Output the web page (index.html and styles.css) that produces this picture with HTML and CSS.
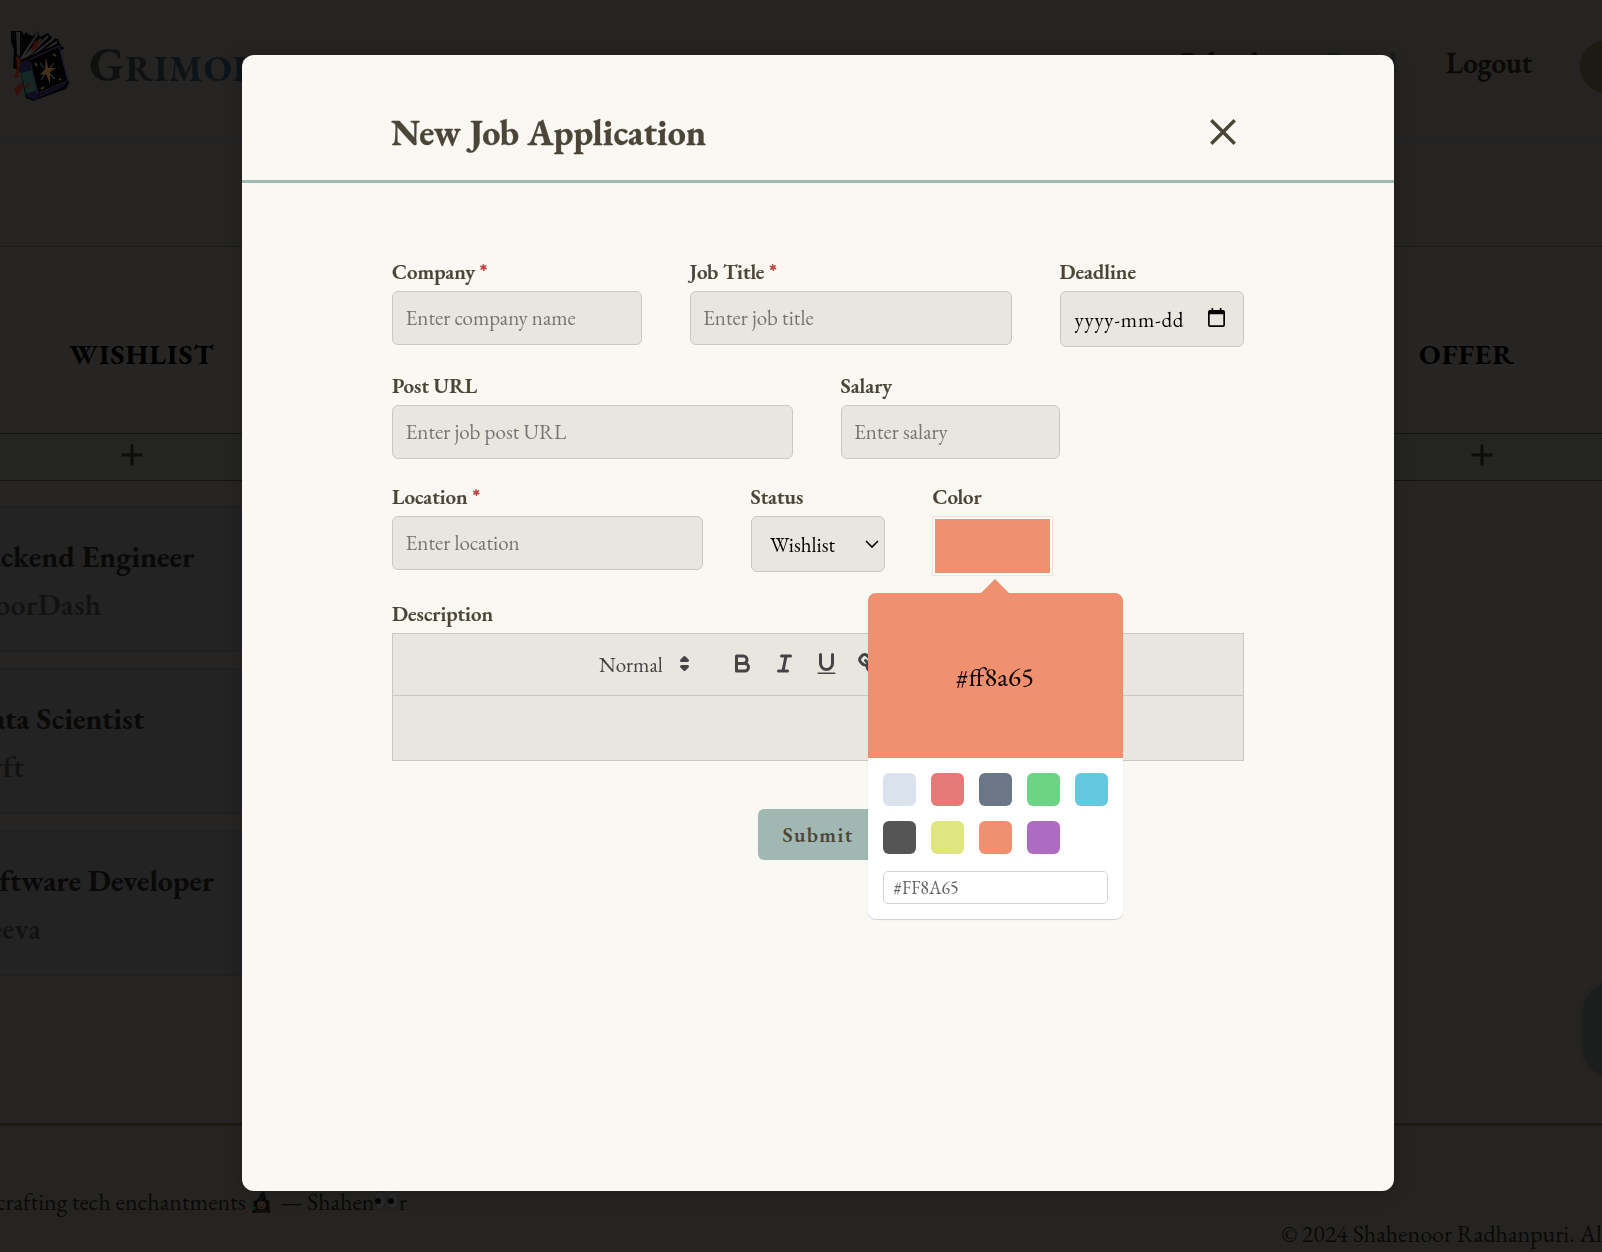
FILE: index.html
```html
<!DOCTYPE html>
<html lang="en">
<head>
<meta charset="utf-8">
<title>Grimoire</title>
<link rel="stylesheet" href="styles.css">
</head>
<body>
<div class="page">
  <header class="topbar">
    <div class="brand">
      <svg class="brand-logo" viewBox="0 0 60 72">
        <path d="M1 1h11l2 4 2-3 3 3 4 1 5-5 2 6 8-4 4 5 6 1 3 7 4 2-30 18-15 5-7-3 1-18-3-8z" fill="#020202"/>
        <path d="M6 2h4v25l-3-3z" fill="#242326"/>
        <path d="M28 3L11 29M31 9L12 30M38 6L14 30M44 8L17 30M47 12L22 29" stroke="#29282a" stroke-width="2.2"/>
        <path d="M24 12l6-3-3 9-6 4z" fill="#35100b"/>
        <path d="M8 31l41-18 2 9 8 31-3 6-33 12-7-3z" fill="#020203"/>
        <path d="M9 33l9-4 10 36 29-13-2 4-31 14-7-3z" fill="#110d20"/>
        <path d="M11 43l11-3 5 20-11 4z" fill="#152823"/>
        <path d="M19 30l30-14 9 35M20 32l8 32M29 63l28-12" fill="none" stroke="#1d1a2b" stroke-width="1.3"/>
        <path d="M24 32l25-12 7 29-26 12z" fill="#020203"/>
        <path d="M6 26l5 3-3 19-4-1 3-8zM11 52l3 5-7 9-3-6z" fill="#35100b"/>
        <path d="M36 27l2 11 8 0-6 4 0 12-4-10-6 1 5-6z" fill="#44301b"/>
        <path d="M30 33l4 5M44 33l-4 5M31 50l4-6M45 49l-5-5" stroke="#263936" stroke-width="1.200"/>
        <path d="M25 33l2 3M43 24l3 2M31 59l3-2M49 50l2-1" stroke="#403410" stroke-width="1.800"/>
        <path d="M18 52v7M15 56l6-1" stroke="#34110d" stroke-width="1.2"/>
      </svg>
      <span class="brand-name">G<span class="brand-caps">RIMOIRE</span></span>
    </div>
    <nav class="nav">
      <a class="nav-calendar">Calendar</a>
      <a class="nav-board">Board</a>
      <a class="nav-logout">Logout</a>
    </nav>
    <div class="avatar"></div>
  </header>

  <div class="toolbar"></div>

  <main class="board">
    <section class="column column-first">
      <h2 class="column-title wishlist">WISHLIST</h2>
      <div class="add"><svg viewBox="0 0 22 22"><path d="M11 0.5v21M0.5 11h21"/></svg></div>
      <div class="cards">
        <article class="card"><h3>Backend Engineer</h3><p>DoorDash</p></article>
        <article class="card"><h3>Data Scientist</h3><p>Lyft</p></article>
        <article class="card"><h3>Software Developer</h3><p>Veeva</p></article>
      </div>
    </section>
    <section class="column column-mid"><div class="column-title"></div><div class="add"></div></section>
    <section class="column column-last">
      <h2 class="column-title offer">OFFER</h2>
      <div class="add"><svg viewBox="0 0 22 22"><path d="M11 0.5v21M0.5 11h21"/></svg></div>
    </section>
  </main>

  <footer class="footer">
    <p class="credit"><span>crafting tech enchantments</span>
      <svg class="witch" viewBox="0 0 21 22">
        <path d="M3 11q6-4 15 0l1 11H1z" fill="#0a0807"/>
        <circle cx="10.500" cy="14" r="4.500" fill="#2c221c"/>
        <path d="M1 11.500Q5 9 7 8l3-6 3-2 1 3 1 5q3 1 5 3.500-9-3-19 0z" fill="#0b0a0d"/>
        <path d="M4 22q1-4 6.500-3.500Q17 18 18 22z" fill="#121110"/>
        <circle cx="2.500" cy="17" r="2.300" fill="#0d2a1b"/>
        <path d="M8.500 14h1M12 14h1M9.500 16.500h2" stroke="#0a0706"/>
      </svg>
      <span class="dash">—</span><span class="sign">Shahen</span><svg class="eyes" viewBox="0 0 25 19">
        <ellipse cx="6" cy="9.500" rx="5.500" ry="8.800" fill="#292929" stroke="#1d1d1e"/>
        <ellipse cx="19" cy="9.500" rx="5.500" ry="8.800" fill="#292929" stroke="#1d1d1e"/>
        <circle cx="4" cy="10" r="3" fill="#080504"/><circle cx="17" cy="10" r="3" fill="#080504"/>
      </svg><span>r</span></p>
    <p class="legal">© 2024 Shahenoor Radhanpuri. All rights reserved.</p>
  </footer>
  <div class="chat"></div>
</div>

<div class="modal">
  <div class="modal-head">
    <h1>New Job Application</h1>
    <svg class="close" viewBox="0 0 26 26"><path d="M1.300 1.300l23.400 23.400M24.700 1.300L1.300 24.700"/></svg>
  </div>
  <form class="form">
    <div class="row row-a">
      <label class="field company"><span class="label">Company <b>*</b></span><input type="text" placeholder="Enter company name"></label>
      <label class="field job"><span class="label">Job Title <b>*</b></span><input type="text" placeholder="Enter job title"></label>
      <div class="field deadline"><span class="label">Deadline</span>
        <div class="box date"><span>yyyy-mm-dd</span>
          <svg viewBox="0 0 17 19"><path d="M3.500 0h1.700v2h6.600V0h1.700v2H15a2 2 0 0 1 2 2v13a2 2 0 0 1-2 2H2a2 2 0 0 1-2-2V4a2 2 0 0 1 2-2h1.500zM1.700 6.200v11h13.600v-11z" fill-rule="evenodd"/></svg>
        </div>
      </div>
    </div>
    <div class="row row-b">
      <label class="field url"><span class="label">Post URL</span><input type="text" placeholder="Enter job post URL"></label>
      <label class="field salary"><span class="label">Salary</span><input type="text" placeholder="Enter salary"></label>
    </div>
    <div class="row row-c">
      <label class="field location"><span class="label">Location <b>*</b></span><input type="text" placeholder="Enter location"></label>
      <div class="field status"><span class="label">Status</span>
        <div class="box select"><span>Wishlist</span><svg viewBox="0 0 14 8"><path d="M1 1l6 6 6-6"/></svg></div>
      </div>
      <div class="field color"><span class="label">Color</span>
        <div class="swatch-box"><div class="swatch-fill"></div></div>
        <div class="picker">
          <div class="picker-head">#ff8a65</div>
          <div class="picker-body">
            <div class="swatches">
              <i class="c1"></i><i class="c2"></i><i class="c3"></i><i class="c4"></i><i class="c5"></i>
              <i class="c6"></i><i class="c7"></i><i class="c8"></i><i class="c9"></i>
            </div>
            <div class="hex">#FF8A65</div>
          </div>
        </div>
      </div>
    </div>
    <div class="field description"><span class="label">Description</span>
      <div class="editor">
        <div class="editor-bar">
          <span>Normal</span>
          <svg class="caret" viewBox="0 0 18 18"><path class="solid" d="M7 11l2 2 2-2zM7 7l2-2 2 2z"/></svg>
          <svg viewBox="0 0 18 18"><path d="M5 4h4.500a2.500 2.500 0 0 1 0 5H5zM5 9h5.500a2.500 2.500 0 0 1 0 5H5z"/></svg>
          <svg viewBox="0 0 18 18"><path d="M7 4h6M5 14h6M8 14l2-10"/></svg>
          <svg viewBox="0 0 18 18"><path d="M5 3v6a4 4 0 0 0 8 0V3"/><rect class="rule" x="3" y="15" width="12" height="1" rx=".5"/></svg>
          <svg viewBox="0 0 18 18"><path d="M7 7l4 4M8.900 4.577a3.476 3.476 0 0 1 .36 4.679A3.476 3.476 0 0 1 4.577 8.900C3.185 7.500 2.035 6.400 4.217 4.217S7.500 3.185 8.900 4.577ZM13.423 9.100a3.476 3.476 0 0 0-4.679-.36 3.476 3.476 0 0 0 .36 4.679c1.392 1.392 2.500 2.542 4.679.36S14.815 10.500 13.423 9.100Z"/></svg>
        </div>
        <div class="editor-body"></div>
      </div>
    </div>
    <button class="submit" type="button">Submit</button>
  </form>
</div>
</body>
</html>
```
FILE: styles.css
```css
* { box-sizing: border-box; }
html, body { margin: 0; height: 100%; overflow: hidden; background: #262423; }
body { font-family: "EB Garamond", "Liberation Serif", serif; color: #4b4537; }
h1, h2, h3, p { margin: 0; }
svg { display: block; flex: none; }

/* Board page behind the dialog */
.page { width: 1602px; height: 1252px; overflow: hidden; display: flex; flex-direction: column; color: #0a0907; }
.topbar { flex: none; display: flex; align-items: center; height: 143px; padding: 0 0 7px 10px; background: #262422; border-bottom: 4px solid #232323; }
.brand { flex: 0 0 1165px; display: flex; align-items: center; gap: 19px; }
.brand-logo { width: 60px; height: 72px; }
.brand-name { font-size: 49px; line-height: 50px; font-weight: bold; letter-spacing: 1px; background: linear-gradient(90deg, #0f100e 0, #0d1419 110px, #0d1419 100%); -webkit-background-clip: text; background-clip: text; color: transparent; }
.brand-caps { font-size: 37px; letter-spacing: 1px; }
.nav { display: flex; padding-bottom: 7px; font-size: 29px; line-height: 32px; font-weight: 600; -webkit-text-stroke: .3px; }
.nav-calendar { width: 146px; }
.nav-board { width: 125px; padding-right: 49px; text-align: right; color: #171c19; }
.nav-logout { width: 134px; }
.avatar { flex: 0 0 53px; height: 53px; border-radius: 50%; background: #1c1a13; }
.toolbar { flex: none; height: 104px; background: #252423; border-bottom: 1px solid #191918; }
.board { flex: none; height: 876px; display: flex; background: #272523; }
.column { flex: none; }
.column-first { width: 267px; }
.column-mid { width: 1079px; }
.column-last { width: 270px; }
.column-title { height: 187px; padding-top: 92px; border-bottom: 1px solid #141413; font-size: 28.5px; line-height: 30px; letter-spacing: 1px; font-weight: bold; color: #000; }
.wishlist { padding-left: 69px; }
.offer { padding-left: 73px; }
.add { display: flex; align-items: center; height: 47px; padding-bottom: 5px; background: #242423; border-bottom: 1px solid #121211; }
.add svg { width: 22px; height: 22px; margin-left: 121px; stroke: #0e0d0b; stroke-width: 3; }
.column-last .add svg { margin-left: 125px; }
.cards { display: flex; flex-direction: column; gap: 16px; padding-top: 25px; }
.card { height: 146px; padding: 34px 0 0; background: #232323; border: solid #1f1f1f; border-width: 1px 0; font-size: 30px; line-height: 32px; white-space: nowrap; }
.card h3 { margin: 0 0 16px -31px; font-size: inherit; }
.card p { margin-left: -28px; letter-spacing: .3px; font-weight: 600; color: #131210; }
.footer { flex: none; height: 129px; display: flex; justify-content: space-between; border-top: 3px solid #1c1a13; background: #252422; font-size: 24px; line-height: 28px; white-space: nowrap; }
.credit { display: flex; width: 420px; padding-top: 62px; }
.credit > span:first-child { width: 255px; margin-left: -4px; }
.witch { width: 21px; height: 22px; margin-top: 3px; }
.dash { width: 35px; padding-left: 8px; }
.credit .sign { width: 67px; }
.eyes { width: 25px; height: 19px; margin-top: 3px; }
.legal { width: 321px; padding-top: 94px; }
.chat { position: fixed; left: 1583px; top: 981px; width: 92px; height: 94px; border-radius: 32px; background: #1a1f1d; box-shadow: 0 3px 6px rgba(0, 0, 0, .35); }

/* Dialog */
.modal { position: fixed; left: 242px; top: 55px; width: 1152px; height: 1135.500px; border-radius: 12px; background: #f9f8f3; box-shadow: 0 2px 20px rgba(0, 0, 0, .2); }
.modal-head { display: flex; justify-content: space-between; align-items: flex-start; height: 127.500px; padding: 56px 158px 0 149px; border-bottom: 3px solid #a0bab1; }
.modal-head h1 { font-size: 36px; line-height: 44px; -webkit-text-stroke: .3px; }
.close { width: 26px; height: 26px; margin-top: 8px; stroke: #4b4537; stroke-width: 3.4; }
.form { padding: 76px 150px 0; display: flex; flex-direction: column; font-size: 21px; }
.row { display: flex; align-items: flex-start; gap: 48px; }
.row-a { height: 114px; }
.row-b { height: 111px; }
.row-c { height: 117px; }
.field { display: block; position: relative; }
.label { display: block; height: 32px; line-height: 26px; font-weight: 600; -webkit-text-stroke: .2px; white-space: nowrap; }
.label b { font-weight: 700; color: #c0453f; }
.field input, .box { display: flex; align-items: center; width: 100%; height: 54px; margin: 0; padding: 0 13px; border: 1px solid #c8c8c8; border-radius: 6px; background: #e8e6df; font: inherit; outline: 0; }
.field input { padding-left: 12.500px; }
.field input::placeholder { color: #757575; opacity: 1; }
.company { width: 249.500px; }
.job { width: 322px; }
.deadline { width: 184.500px; }
.url { width: 400.500px; }
.salary { width: 219.500px; }
.location { width: 310.500px; }
.status { width: 134px; }
.color { width: 120px; }
.deadline .box, .status .box { height: 56.500px; color: #000; justify-content: space-between; }
.box.date { padding: 2px 18px 0 14px; letter-spacing: .75px; }
.date svg { width: 17px; height: 19px; margin-bottom: 4px; }
.box.select { padding: 1px 5px 0 18.500px; }
.select svg { width: 14px; height: 8px; fill: none; stroke: #000; stroke-width: 1.700; }
.swatch-box { width: 121px; height: 60px; margin-left: -1px; padding: 2px; border: 1px solid #fbe0d6; background: #fff; }
.swatch-fill { height: 100%; background: #f0906e; }

/* Colour picker popover */
.picker { position: absolute; z-index: 2; left: -65px; top: 109.500px; width: 255px; height: 326px; border-radius: 8px; background: #fff; box-shadow: 0 1px 1px rgba(0, 0, 0, .16); }
.picker::before { content: ""; position: absolute; left: 113px; top: -14px; border: solid transparent; border-width: 0 14.500px 14.500px; border-bottom-color: #f0906e; }
.picker-head { display: flex; align-items: center; justify-content: center; height: 165px; padding-top: 1px; border-radius: 8px 8px 0 0; background: #f0906e; font-size: 27px; color: #000; }
.picker-body { padding: 15px; }
.swatches { display: grid; grid-template-columns: repeat(5, 33px); gap: 15px; }
.swatches i { height: 33px; border-radius: 6px; }
.c1 { background: #dae2ed; }
.c2 { background: #e37a77; }
.c3 { background: #6b7686; }
.c4 { background: #6cd484; }
.c5 { background: #64c8e1; }
.c6 { background: #555; }
.c7 { background: #dfe681; }
.c8 { background: #f0906e; }
.c9 { background: #ae6bc2; }
.hex { display: flex; align-items: center; height: 33px; margin-top: 17px; padding: 0 0 0 10px; border: 1px solid #d4d4d4; border-radius: 5px; font-size: 18px; color: #666; }

/* Rich text editor */
.editor { height: 128px; border: 1px solid #c8c8c8; background: #e8e6df; }
.editor-bar { display: flex; align-items: center; gap: 15.200px; height: 62px; padding: 0 0 2px 206px; border-bottom: 1px solid #c8c8c8; color: #444; }
.editor-bar span { width: 63.500px; padding-top: 2px; }
.editor-bar svg { width: 27px; height: 27px; fill: none; stroke: #444; stroke-width: 2; stroke-linecap: round; stroke-linejoin: round; }
.editor-bar .caret { margin: 0 15.500px 0 -6.500px; }
.editor-bar .solid { fill: #444; }
.editor-bar .rule { fill: #444; stroke: none; }
.submit { align-self: center; width: 120px; height: 51px; margin: 48px 0 0; padding: 0; border: 0; border-radius: 6px; background: #a0b8b1; color: #4b4537; font: 600 21px "EB Garamond", "Liberation Serif", serif; letter-spacing: 1.400px; }
```
